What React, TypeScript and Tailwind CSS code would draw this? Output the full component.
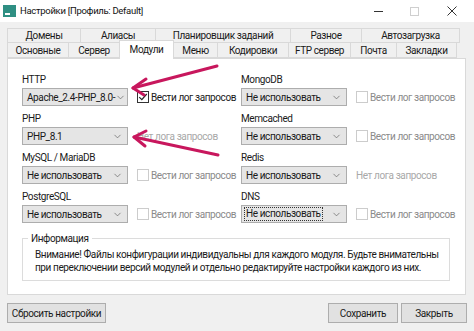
import { ChevronDown } from "lucide-react";

type Module = {
  label: string;
  value: string;
  log: "on" | "off" | "none";
  focus?: boolean;
};

const left: Module[] = [
  { label: "HTTP", value: "Apache_2.4-PHP_8.0-", log: "on" },
  { label: "PHP", value: "PHP_8.1", log: "none" },
  { label: "MySQL / MariaDB", value: "Не использовать", log: "off" },
  { label: "PostgreSQL", value: "Не использовать", log: "off" },
];

const right: Module[] = [
  { label: "MongoDB", value: "Не использовать", log: "off" },
  { label: "Memcached", value: "Не использовать", log: "off" },
  { label: "Redis", value: "Не использовать", log: "none" },
  { label: "DNS", value: "Не использовать", log: "off", focus: true },
];

const tabsTop = [
  { label: "Домены", w: "w-[74px]" },
  { label: "Алиасы", w: "w-[76px]" },
  { label: "Планировщик заданий", w: "w-[136px]" },
  { label: "Разное", w: "w-[72px]" },
  { label: "Автозагрузка", w: "w-[99px]" },
];

const tabsBottom = [
  { label: "Основные", w: "w-[62px]" },
  { label: "Сервер", w: "w-[52px]" },
  { label: "Модули", w: "w-[55px]", active: true },
  { label: "Меню", w: "w-[45px]" },
  { label: "Кодировки", w: "w-[72px]" },
  { label: "FTP сервер", w: "w-[63px]" },
  { label: "Почта", w: "w-[47px]" },
  { label: "Закладки", w: "w-[61px]" },
];

function ModuleRow({ m }: { m: Module }) {
  return (
    <div className="flex flex-col">
      <div className="h-[13px] leading-[13px] text-[#1a1a1a]">{m.label}</div>
      <div className="mt-[2px] flex items-center">
        <div className="flex h-[18px] w-[106px] shrink-0 items-center justify-between overflow-hidden border border-[#adadad] bg-[#e5e5e5] pl-[2px] pr-[4px]">
          <span
            className={
              m.focus
                ? "border border-dotted border-[#333] px-[1px] leading-[12px] text-[#1a1a1a]"
                : "pl-[2px] text-[#1a1a1a]"
            }
          >
            {m.value}
          </span>
          <ChevronDown className="h-[11px] w-[11px] shrink-0 text-[#606060]" strokeWidth={1.5} />
        </div>
        {m.log === "none" ? (
          <span className="ml-[9px] text-[#a8a8a8]">Нет лога запросов</span>
        ) : (
          <div className="ml-[9px] flex items-center">
            <span
              className={`flex h-[12px] w-[12px] shrink-0 items-center justify-center border bg-white ${
                m.log === "on" ? "border-[#333]" : "border-[#cccccc]"
              }`}
            >
              {m.log === "on" ? (
                <svg viewBox="0 0 12 12" className="h-[10px] w-[10px]">
                  <path d="M1.5 6.2 L4.6 9.2 L10.5 2.4" fill="none" stroke="#222" strokeWidth="1.4" />
                </svg>
              ) : null}
            </span>
            <span className={`ml-[2px] ${m.log === "on" ? "text-[#1a1a1a]" : "text-[#8a8a8a]"}`}>
              Вести лог запросов
            </span>
          </div>
        )}
      </div>
    </div>
  );
}

export default function App() {
  return (
    <div className="relative h-[331px] w-[474px] overflow-hidden whitespace-nowrap bg-[#f0f0f0] font-['Roboto',sans-serif] text-[10px] tracking-[-0.4px]">
      {/* title bar */}
      <div className="flex h-[22px] items-center bg-white">
        <div className="ml-[3px] flex h-[12px] w-[13px] items-end bg-[#2f8f83] pb-[2px] pl-[2px]">
          <span className="block h-[2px] w-[5px] bg-white" />
        </div>
        <span className="ml-[4px] text-[9.5px] tracking-[-0.3px] text-[#111]">Настройки [Профиль: Default]</span>
        <div className="ml-auto flex items-center text-[#333]">
          <span className="block h-px w-[9px] bg-[#333]" />
          <span className="ml-[27px] block h-[9px] w-[9px] border border-[#cfcfcf]" />
          <svg viewBox="0 0 10 10" className="ml-[28px] mr-[17px] h-[10px] w-[10px]">
            <path d="M0.5 0.5 L9.5 9.5 M9.5 0.5 L0.5 9.5" stroke="#333" strokeWidth="1" />
          </svg>
        </div>
      </div>

      {/* tabs */}
      <div className="ml-[7px] mt-[6px] flex flex-col">
        <div className="flex h-[15px]">
          {tabsTop.map((t) => (
            <div
              key={t.label}
              className={`${t.w} -mr-px flex items-center justify-center border border-[#d9d9d9] bg-[#f0f0f0] text-[#1a1a1a]`}
            >
              {t.label}
            </div>
          ))}
        </div>
        <div className="relative z-10 flex h-[15px]">
          {tabsBottom.map((t) =>
            t.active ? (
              <div
                key={t.label}
                className={`${t.w} -mr-px -mt-[3px] flex h-[19px] items-start justify-center border border-b-0 border-[#d9d9d9] bg-white pt-[1px] text-[#1a1a1a]`}
              >
                {t.label}
              </div>
            ) : (
              <div
                key={t.label}
                className={`${t.w} -mr-px -mt-px flex h-[16px] items-center justify-center border border-[#d9d9d9] bg-[#f0f0f0] text-[#1a1a1a]`}
              >
                {t.label}
              </div>
            ),
          )}
        </div>

        {/* panel */}
        <div className="h-[237px] w-[459px] border border-[#d9d9d9] bg-white pl-[14px] pt-[14px]">
          <div className="flex">
            <div className="flex w-[219px] flex-col gap-[6px]">
              {left.map((m) => (
                <ModuleRow key={m.label} m={m} />
              ))}
            </div>
            <div className="flex flex-col gap-[6px]">
              {right.map((m) => (
                <ModuleRow key={m.label} m={m} />
              ))}
            </div>
          </div>

          <div className="relative mt-[15px] h-[43px] w-[428px] border border-[#dcdcdc] pl-[12px] pt-[9px] leading-[13px] text-[#1a1a1a]">
            <span className="absolute -top-[7px] left-[5px] bg-white px-[3px] text-[#1a1a1a]">Информация</span>
            <div>Внимание! Файлы конфигурации индивидуальны для каждого модуля. Будьте внимательны</div>
            <div>при переключении версий модулей и отдельно редактируйте настройки каждого из них.</div>
          </div>
        </div>
      </div>

      {/* buttons */}
      <div className="mt-[8px] flex px-[7px]">
        <button className="h-[20px] w-[99px] border border-[#adadad] bg-[#e1e1e1] text-[#1a1a1a]">
          Сбросить настройки
        </button>
        <button className="ml-auto h-[20px] w-[70px] border border-[#adadad] bg-[#e1e1e1] text-[#1a1a1a]">
          Сохранить
        </button>
        <button className="ml-[3px] h-[20px] w-[66px] border border-[#adadad] bg-[#e1e1e1] text-[#1a1a1a]">
          Закрыть
        </button>
      </div>

      {/* annotation arrows */}
      <svg className="pointer-events-none absolute left-0 top-0 h-[331px] w-[474px]" viewBox="0 0 474 331">
        <g stroke="#c8175d" strokeWidth="3" strokeLinecap="round" fill="none">
          <path d="M217 66 L133 88" />
          <path d="M133 88 L146 79 M133 88 L144 95" />
          <path d="M218 155 L134 137" />
          <path d="M134 137 L146 131 M134 137 L145 146" />
        </g>
      </svg>
    </div>
  );
}
